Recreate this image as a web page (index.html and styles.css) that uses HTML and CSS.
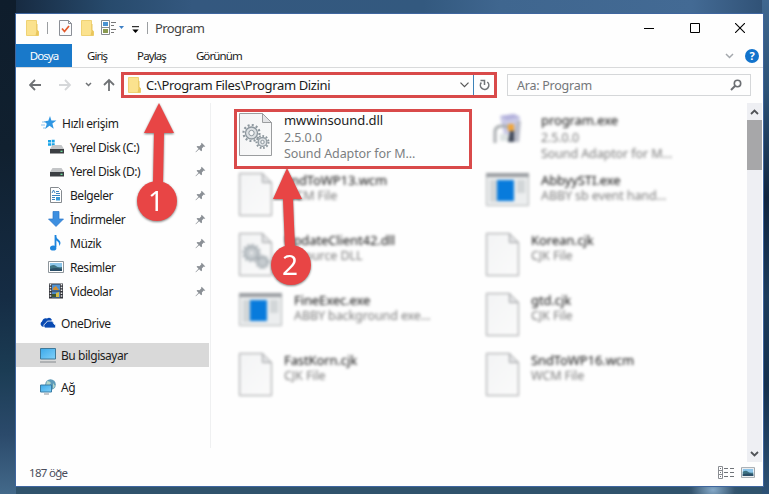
FILE: index.html
```html
<!DOCTYPE html>
<html lang="tr">
<head>
    <meta charset="UTF-8">
    <meta name="viewport" content="width=device-width, initial-scale=1.0">
    <title>Program</title>
    <link rel="stylesheet" href="styles.css">
</head>
<body>

    <!-- Shared icons -->
    <svg class="defs" width="0" height="0">
        <linearGradient id="paper" x1="0" y1="0" x2="1" y2="1">
            <stop offset="0" stop-color="#f3f4f5"/><stop offset="1" stop-color="#fafafa"/>
        </linearGradient>
        <linearGradient id="screen" x1="0" y1="0" x2="1" y2="1">
            <stop offset="0" stop-color="#3ba9ea"/><stop offset="1" stop-color="#7fd0f9"/>
        </linearGradient>
        <symbol id="folder" viewBox="0 0 13 16">
            <path d="M.5.5h10v10l2 1v4H.5z" fill="#fbe28e" stroke="#efd274"/>
            <path d="M10.500 4v7l-1 4.500h3v-4.500l-1-1V4z" fill="#e9c65c"/>
        </symbol>
        <symbol id="pin" viewBox="0 0 12 12">
            <path d="M7.300.8l4 4-1 .5-.8-.3-2 2 .2 2.200-1 .9-2.200-2.200L1 11.300l-.5-.4L3.800 7.400 1.700 5.200l1-.9 2.200.2 2-2-.2-.9z" fill="#8b9096"/>
        </symbol>
        <symbol id="drive" viewBox="0 0 14 9">
            <path d="M2.500 0h9L14 4H0z" fill="#c3c5c7"/>
            <path d="M0 4h14v4.500H0z" fill="#3c3f43"/>
            <path d="M10.500 5.700h2v1.300h-2z" fill="#6be09a"/>
        </symbol>
        <symbol id="picture" viewBox="0 0 16 12">
            <path d="M.5.5h15v11H.5z" fill="#fff" stroke="#8d959b"/>
            <path d="M2 2h12v8H2z" fill="#8cc5ea"/>
            <path d="M2 5q4-2 6 0t6 1v4H2z" fill="#3e7383"/>
            <path d="M2 8q6-2 12 0v2H2z" fill="#2b4f68"/>
        </symbol>
        <symbol id="file" viewBox="0 0 33 43">
            <path d="M.5.5h23l9 9v33H.5z" fill="url(#paper)" stroke="#9b9d9f"/>
            <path d="M23.500.5v9h9z" fill="#e3e4e6" stroke="#9b9d9f"/>
        </symbol>
        <symbol id="gears" viewBox="0 0 33 43">
            <use href="#file"/>
            <g fill="none" stroke="#8d979e">
                <circle cx="12.500" cy="20" r="8" stroke-width="2.200" stroke-dasharray="2 2.190"/>
                <circle cx="12.500" cy="20" r="6" fill="#dce0e3" stroke-width="1.300"/>
                <circle cx="12.500" cy="20" r="2.700" fill="#f6f7f8"/>
                <circle cx="23.500" cy="29" r="6" stroke-width="2" stroke-dasharray="1.700 1.730"/>
                <circle cx="23.500" cy="29" r="4.400" fill="#dce0e3" stroke-width="1.200"/>
                <circle cx="23.500" cy="29" r="1.700" fill="#f6f7f8"/>
            </g>
        </symbol>
        <symbol id="app" viewBox="0 0 43 33">
            <path d="M.5.5h42v32H.5z" fill="#eceeef" stroke="#b0b3b5"/>
            <path d="M0 0h43v4H0z" fill="#999ca0"/>
            <path d="M4 7h7v22H4zM31 7h8v13h-8z" fill="#d2d6d8"/>
            <path d="M11 7h17v21H11z" fill="#087bdc"/>
        </symbol>
        <symbol id="installer" viewBox="0 0 34 34">
            <path d="M8 3l14-2 6 3-2 17-14 1z" fill="#c9c9e6"/>
            <path d="M8 3l14-2 6 3-13 3z" fill="#b3b1dc"/>
            <path d="M25 8h4l-2 21h-8z" fill="#b9bcc8"/>
            <path d="M3 30V19q0-6 7-6t8 4" fill="none" stroke="#a9adb0" stroke-width="3"/>
            <path d="M8 21h9v7H8z" fill="#dde3e3"/>
            <path d="M16 11h6v7h-6z" fill="#f0a63c"/>
            <path d="M18 18h4v11h-6z" fill="#424a5a"/>
        </symbol>
    </svg>

    <div class="window">
        <header class="titlebar">
            <svg class="folder-sm" width="13" height="16"><use href="#folder"/></svg>
            <span class="sep first"></span>
            <svg class="check" width="13" height="16" viewBox="0 0 13 16">
                <path d="M.5.5h9l3 3v12H.5z" fill="#fafbfd" stroke="#8b8f96"/>
                <path d="M9.500.5v3h3" fill="none" stroke="#8b8f96"/>
                <path d="M3 8.500l2.500 3 4.500-5.500" fill="none" stroke="#e2592a" stroke-width="1.700"/>
            </svg>
            <svg class="folder-sm" width="13" height="16"><use href="#folder"/></svg>
            <svg class="view" width="24" height="16" viewBox="0 0 24 16">
                <path d="M.5.5h8v14h-8zM.5 7.500h8" fill="#fff" stroke="#878b90"/>
                <path d="M2 2h5v4H2z" fill="#4b93d2"/><path d="M2 9h5v4H2z" fill="#8a9a50"/>
                <path d="M10 2.500h5M10 5.500h3M10 9.500h5M10 12.500h3" stroke="#777"/>
                <path d="M18 6h5l-2.500 3z" fill="#3d7fc4"/>
            </svg>
            <svg class="more" width="7" height="8" viewBox="0 0 7 8">
                <path d="M0 .7h7" stroke="#000"/><path d="M.3 3.500h6.400L3.500 7z"/>
            </svg>
            <span class="sep"></span>
            <h1>Program</h1>
            <div class="controls">
                <svg width="10" height="10"><path d="M0 5.500h10" stroke="#000"/></svg>
                <svg width="10" height="10"><path d="M.5.5h9v9h-9z" fill="none" stroke="#000"/></svg>
                <svg width="10" height="10"><path d="M0 0l10 10M10 0L0 10" stroke="#000" stroke-width="1.100"/></svg>
            </div>
        </header>

        <nav class="tabs">
            <span class="tab active">Dosya</span>
            <span class="tab">Giriş</span>
            <span class="tab">Paylaş</span>
            <span class="tab">Görünüm</span>
            <svg class="collapse" width="9" height="6"><path d="M1 1l3.500 3.500L8 1" fill="none" stroke="#a4a8ad" stroke-width="1.500"/></svg>
            <span class="help">?</span>
        </nav>

        <div class="toolbar">
            <svg class="arrows" width="90" height="16" viewBox="0 0 90 16" fill="none" stroke="#6f7275" stroke-width="1.800">
                <path d="M12 8H1M6 3L1 8l5 5"/>
                <path d="M30 8h11M36 3l5 5-5 5" stroke="#d5d7d9"/>
                <path d="M57 6l2.500 2.500L62 6" stroke-width="1.500"/>
                <path d="M80 14V3M75 8l5-5 5 5"/>
            </svg>
            <div class="address">
                <svg width="13" height="16"><use href="#folder"/></svg>
                <span class="path">C:\Program Files\Program Dizini</span>
                <svg width="9" height="6"><path d="M.5.7l4 4 4-4" fill="none" stroke="#555" stroke-width="1.200"/></svg>
                <span class="reload">
                    <svg width="11" height="12" viewBox="0 0 11 12">
                        <path d="M8.300 3A4.200 4.200 0 1 1 2.300 3.600" fill="none" stroke="#707478" stroke-width="1.600"/>
                        <path d="M1.500 1.500H5.500V6" fill="none" stroke="#707478" stroke-width="1.500"/>
                    </svg>
                </span>
            </div>
            <div class="search">
                <span>Ara: Program</span>
                <svg width="12" height="12" viewBox="0 0 12 12" fill="none" stroke="#6b6e72">
                    <circle cx="7.500" cy="4.500" r="3.200" stroke-width="1.600"/><path d="M5 7L1 11" stroke-width="2"/>
                </svg>
            </div>
        </div>

        <main class="content">
            <aside class="sidebar">
                <div class="item root">
                    <svg width="16" height="14" viewBox="0 0 16 14">
                        <path d="M9 0l1.400 4.500 5 .1-4 2.900 1.300 5.200-4.200-2.900-4.300 3.200 1.600-5.200-3-2.600 4.500-.4z" fill="#2f97e3"/>
                        <path d="M1 6h4M0 9h4M2 12h3" stroke="#8cc4ec"/>
                    </svg>
                    <span>Hızlı erişim</span>
                </div>
                <div class="item">
                    <svg width="16" height="16" viewBox="0 0 16 16">
                        <path d="M0 1h3v2.500H0zM3.700.8h3v2.700h-3zM0 4.300h3v2.500H0zM3.700 4.300h3V7h-3z" fill="#19a4e8"/>
                        <use href="#drive" x="2" y="6" width="14" height="9"/>
                    </svg>
                    <span>Yerel Disk (C:)</span>
                    <svg class="pin" width="11" height="11"><use href="#pin"/></svg>
                </div>
                <div class="item">
                    <svg width="16" height="16" viewBox="0 0 16 16"><use href="#drive" x="2" y="5" width="14" height="9"/></svg>
                    <span>Yerel Disk (D:)</span>
                    <svg class="pin" width="11" height="11"><use href="#pin"/></svg>
                </div>
                <div class="item">
                    <svg width="16" height="16" viewBox="0 0 16 16">
                        <path d="M2.500.5h8l3 3v12h-11z" fill="#fff" stroke="#858a8f"/>
                        <path d="M4 6l1.500-3L7 6M8 4.500h3M8 6.500h4M4 8.500h8M4 10.500h3M4 12.500h3" fill="none" stroke="#3d82be"/>
                        <path d="M8 10h4v3.500H8z" fill="#3b9ad7"/>
                    </svg>
                    <span>Belgeler</span>
                    <svg class="pin" width="11" height="11"><use href="#pin"/></svg>
                </div>
                <div class="item">
                    <svg width="16" height="16" viewBox="0 0 16 16"><path d="M5 .5h6V8h4.500L8 15.500.5 8H5z" fill="#3d8fe0" stroke="#2a76c8" stroke-width=".7"/></svg>
                    <span>İndirmeler</span>
                    <svg class="pin" width="11" height="11"><use href="#pin"/></svg>
                </div>
                <div class="item">
                    <svg width="16" height="16" viewBox="0 0 16 16">
                        <path d="M7.500 0v12" stroke="#1e86de" stroke-width="1.800"/>
                        <path d="M7.500 0q.5 3 3.500 5 3 3 0 6 1-4-3.500-6z" fill="#1e86de"/>
                        <ellipse cx="5.200" cy="13" rx="3.200" ry="2.600" fill="#1e86de"/>
                    </svg>
                    <span>Müzik</span>
                    <svg class="pin" width="11" height="11"><use href="#pin"/></svg>
                </div>
                <div class="item">
                    <svg width="16" height="12"><use href="#picture"/></svg>
                    <span>Resimler</span>
                    <svg class="pin" width="11" height="11"><use href="#pin"/></svg>
                </div>
                <div class="item">
                    <svg width="16" height="16" viewBox="0 0 16 16">
                        <path d="M1 .5h14v15H1z" fill="#34363c"/>
                        <path d="M2.500 1v14M13.500 1v14" stroke="#e8e8e8" stroke-width="1.500" stroke-dasharray="1.500 1.300"/>
                        <path d="M4 1.500h8v6H4z" fill="#5093d4"/><path d="M4 8.500h8v6H4z" fill="#4d87c4"/>
                        <path d="M5 5l3-2 3 4H5z" fill="#d49135"/><path d="M8 10l3-1v5H8z" fill="#d8bc42"/>
                        <path d="M4 11h4v3H4z" fill="#3d5730"/>
                    </svg>
                    <span>Videolar</span>
                    <svg class="pin" width="11" height="11"><use href="#pin"/></svg>
                </div>
                <div class="item root group">
                    <svg width="16" height="12" viewBox="0 0 16 12">
                        <path d="M3.500 10A3 3 0 0 1 2 4.500Q3.500.5 7 1.500q3-2 5 1.500" fill="#094ab2"/>
                        <path d="M5 11a2.500 2.500 0 0 1 .5-4.500Q7 3 10 4q3-1 4 3 2.500.7 1.500 4z" fill="#094ab2" stroke="#fff" stroke-width=".8"/>
                    </svg>
                    <span>OneDrive</span>
                </div>
                <div class="item root group selected">
                    <svg width="16" height="15" viewBox="0 0 16 15">
                        <path d="M.5.5h15v10.500H.5z" fill="url(#screen)" stroke="#3f7898"/>
                        <path d="M0 14h16" stroke="#858a8e"/>
                    </svg>
                    <span>Bu bilgisayar</span>
                </div>
                <div class="item root group">
                    <svg width="16" height="16" viewBox="0 0 16 16">
                        <circle cx="10.500" cy="5.500" r="5.300" fill="#5e9bb9"/>
                        <path d="M7 2q3 0 4 2l-2 3-3-1zM13 4l2 3-2 3z" fill="#b4d5c8"/>
                        <path d="M.5 6h11v7H.5z" fill="url(#screen)" stroke="#3a7ca4"/>
                        <path d="M4 15h5" stroke="#8b9298"/>
                    </svg>
                    <span>Ağ</span>
                </div>
            </aside>

            <section class="files">
                <div class="file focus">
                    <svg width="33" height="43"><use href="#gears"/></svg>
                    <p><b>mwwinsound.dll</b><i class="version">2.5.0.0</i><i>Sound Adaptor for M...</i></p>
                </div>
                <div class="file blurred three">
                    <svg width="34" height="34"><use href="#installer"/></svg>
                    <p><b>program.exe</b><i class="version">2.5.0.0</i><i>Sound Adaptor for M...</i></p>
                </div>
                <div class="file blurred">
                    <svg width="33" height="43"><use href="#file"/></svg>
                    <p><b>SndToWP13.wcm</b><i>WCM File</i></p>
                </div>
                <div class="file blurred">
                    <svg width="43" height="33"><use href="#app"/></svg>
                    <p><b>AbbyySTI.exe</b><i>ABBY sb event hand...</i></p>
                </div>
                <div class="file blurred">
                    <svg width="33" height="43"><use href="#gears"/></svg>
                    <p><b>UpdateClient42.dll</b><i>Resource DLL</i></p>
                </div>
                <div class="file blurred">
                    <svg width="33" height="43"><use href="#file"/></svg>
                    <p><b>Korean.cjk</b><i>CJK File</i></p>
                </div>
                <div class="file blurred">
                    <svg width="43" height="33"><use href="#app"/></svg>
                    <p><b>FineExec.exe</b><i>ABBY background exe...</i></p>
                </div>
                <div class="file blurred">
                    <svg width="33" height="43"><use href="#file"/></svg>
                    <p><b>gtd.cjk</b><i>CJK File</i></p>
                </div>
                <div class="file blurred">
                    <svg width="33" height="43"><use href="#file"/></svg>
                    <p><b>FastKorn.cjk</b><i>CJK File</i></p>
                </div>
                <div class="file blurred">
                    <svg width="33" height="43"><use href="#file"/></svg>
                    <p><b>SndToWP16.wcm</b><i>WCM File</i></p>
                </div>
            </section>

            <div class="scrollbar">
                <svg width="9" height="6"><path d="M1 5l3.500-3.500L8 5" fill="none" stroke="#505357" stroke-width="1.800"/></svg>
                <div class="thumb"></div>
                <svg class="down" width="9" height="6"><path d="M1 1l3.500 3.500L8 1" fill="none" stroke="#505357" stroke-width="1.800"/></svg>
            </div>
        </main>

        <footer class="status">
            <span>187 öğe</span>
            <svg width="16" height="13" viewBox="0 0 16 13">
                <path d="M.5.5h4v12h-4zM.5 4.500h4M.5 8.500h4" fill="#fff" stroke="#8a8d92"/>
                <path d="M6 2.500h4M6 6.500h4M6 10.500h4M12 2.500h4M12 6.500h4M12 10.500h4M2 2.500h1M2 6.500h1M2 10.500h1" stroke="#6f7378"/>
            </svg>
            <svg width="14" height="11"><use href="#picture"/></svg>
        </footer>
    </div>

    <!-- Step markers -->
    <svg class="marker one" width="44" height="120" viewBox="0 0 44 120">
        <path d="M24 1l15 30H29l-1 50H18l1-50H9z"/>
        <circle cx="22" cy="99" r="20"/>
        <text x="21" y="109">1</text>
    </svg>
    <svg class="marker two" width="44" height="120" viewBox="0 0 44 120">
        <path d="M18 1l15 31H24l2 50H16l-2-50H4z"/>
        <circle cx="22" cy="98" r="20"/>
        <text x="21" y="108">2</text>
    </svg>

</body>
</html>
```
FILE: styles.css
```css
/* Desktop */
* {
    box-sizing: border-box;
}

body {
    margin: 0;
    padding: 14px 6px 8px 16px;
    height: 494px;
    overflow: hidden;
    font-family: "Noto Sans", "Open Sans", sans-serif;
    font-size: 12px;
    color: #1c1c1c;
    background:
        linear-gradient(#3f678f, #2d5378 18%, #10253f 40%, #1c3c5c 60%, #14304d 78%, #2d5175) right / 7px 100% no-repeat,
        linear-gradient(#0f1d2c, #10202f 30%, #152c44 60%, #1b3c54 75%, #2b4a6b 88%, #43698a) left / 16px 100% no-repeat,
        linear-gradient(90deg, #14253a, #274a6c 14%, #34587f 25%, #33597f 55%, #3f668f 65%, #436a94 90%, #2f5074) top / 100% 14px no-repeat,
        radial-gradient(ellipse at 713px 490px, #85a9c8, #34546e 22px, transparent 26px),
        #30536c;
}

.defs {
    position: absolute;
}

svg {
    flex: none;
}

.window {
    display: flex;
    flex-direction: column;
    height: 472px;
    background: #fefefe;
    box-shadow: 0 0 0 1px #3f669f;
}

/* Title bar */
.titlebar {
    display: flex;
    align-items: center;
    height: 30px;
    padding: 0 18px 2px 10px;
}

.sep {
    width: 1px;
    height: 12px;
    background: #9b9ea1;
}

.sep.first {
    margin: 0 11px 0 8px;
}

.check {
    margin-right: 9px;
}

.view {
    margin: 0 7px 0 7px;
}

.more {
    margin: 3px 8px 0 0;
}

.titlebar h1 {
    margin: 0 0 0 7px;
    font-size: 13px;
    font-weight: normal;
    letter-spacing: -0.6px;
    color: #444;
}

.controls {
    display: flex;
    gap: 35.5px;
    margin-left: auto;
}

/* Ribbon tabs */
.tabs {
    display: flex;
    align-items: center;
    height: 24px;
    border-bottom: 1px solid #d9dadb;
    font-size: 11.5px;
    letter-spacing: -0.9px;
}

.tab {
    margin-right: 30px;
}

.tab.active {
    width: 56px;
    height: 23px;
    margin-right: 15px;
    line-height: 23px;
    text-align: center;
    color: #fff;
    background: #1979ca;
}

.collapse {
    margin-left: auto;
}

.help {
    width: 14px;
    height: 14px;
    margin: 0 4px 0 11px;
    border-radius: 50%;
    background: #1273cc;
    color: #fff;
    font-size: 11px;
    font-weight: bold;
    line-height: 14px;
    text-align: center;
    letter-spacing: 0;
}

/* Navigation toolbar */
.toolbar {
    display: flex;
    align-items: center;
    height: 35px;
    padding: 0 12px 1px 13px;
}

.address {
    display: flex;
    align-items: center;
    width: 376px;
    height: 26px;
    margin: 0 10px 0 2px;
    padding-left: 4px;
    border: 3px solid #d94a4a;
    font-size: 13px;
}

.path {
    flex: 1;
    margin-left: 5px;
    letter-spacing: -0.37px;
    white-space: nowrap;
}

.reload {
    display: flex;
    align-items: center;
    height: 20px;
    margin-left: 4px;
    padding: 0 4px 0 5px;
    border-left: 1px solid #3d82b8;
}

.search {
    display: flex;
    flex: 1;
    align-items: center;
    justify-content: space-between;
    height: 22px;
    padding: 0 8px 0 9px;
    border: 1px solid #d5d7d9;
    font-size: 12.5px;
    letter-spacing: -0.25px;
    color: #74777a;
}

/* Sidebar */
.content {
    display: flex;
    height: 359px;
}

.sidebar {
    width: 195px;
    height: 345px;
    padding-top: 8px;
    border-right: 1px solid #eff0f1;
}

.item {
    display: flex;
    align-items: center;
    width: 193px;
    height: 24px;
    padding: 0 3px 0 32px;
    letter-spacing: -0.45px;
}

.item span {
    margin-left: 6px;
    white-space: nowrap;
}

.item.root {
    padding-left: 24px;
}

.item.root:first-child {
    padding-left: 25px;
}

.item.root span {
    margin-left: 5px;
}

.item.group {
    margin-top: 8px;
}

.item.selected {
    background: #d9d9d9;
}

.pin {
    margin-left: auto;
}

/* File tiles */
.files {
    display: grid;
    flex: 1;
    grid-template-columns: 247px 1fr;
    grid-auto-rows: 60px;
    padding: 6px 0 0 23px;
}

.file {
    display: flex;
    align-items: flex-start;
    padding-top: 4px;
    padding-left: 5px;
}

.file p {
    margin: -1px 0 0 12px;
    font-size: 13px;
    line-height: 16px;
    letter-spacing: -0.1px;
    white-space: nowrap;
}

.file b,
.file i {
    display: block;
    font-style: normal;
    font-weight: normal;
}

.file i {
    font-size: 12.5px;
    color: #7c7f82;
}

.file.focus {
    width: 238px;
    padding: 1px 0 0 2px;
    border: 3px solid #d94a4a;
}

.file .version {
    margin-top: 2px;
}

.blurred {
    filter: blur(1.4px);
}

.blurred b {
    color: #111;
}

.blurred i {
    color: #7c7c7c;
}

.three svg {
    margin-left: 6px;
}

.three p {
    margin-left: 15px;
}

/* Scrollbar */
.scrollbar {
    display: flex;
    flex-direction: column;
    align-items: center;
    width: 15px;
    margin-right: 1px;
    padding: 6px 0 5px;
    background: #eeeff3;
}

.thumb {
    width: 15px;
    height: 50px;
    margin-top: 5px;
    background: #a7a7a9;
}

.down {
    margin-top: auto;
}

/* Status bar */
.status {
    display: flex;
    align-items: center;
    gap: 7px;
    height: 24px;
    padding: 0 8px 3px 13px;
    font-size: 11.5px;
    letter-spacing: -0.7px;
    color: #4b4e5c;
}

.status span {
    margin-right: auto;
}

/* Numbered arrows */
.marker {
    position: absolute;
    fill: #e84545;
    filter: drop-shadow(0 1px 1px rgba(0, 0, 0, 0.5));
}

.marker.one {
    left: 135px;
    top: 102px;
}

.marker.two {
    left: 269px;
    top: 167px;
}

.marker text {
    fill: #fff;
    font-size: 28px;
    text-anchor: middle;
}
```
